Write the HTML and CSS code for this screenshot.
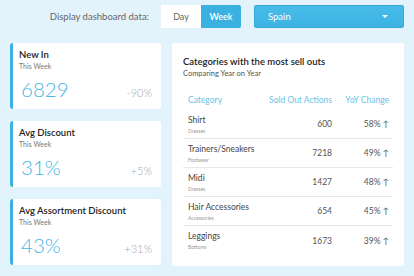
FILE: index.html
```html
<!doctype html>
<html>
<head>
<meta charset="UTF-8">
<title>Dashboard</title>
<link rel="stylesheet" href="styles.css">
</head>
<body>
	<div class="topbar">
		<span class="label">Display dashboard data:</span>
		<div class="toggle">
			<a class="day" href="javascript:void(0);">Day</a>
			<a class="week on" href="javascript:void(0);">Week</a>
		</div>
		<div class="select">
			<span>Spain</span>
			<i class="caret"></i>
		</div>
	</div>
	<div class="main">
		<!--left cards-->
		<div class="stats">
			<div class="card stat">
				<h3>New In</h3>
				<p class="sub">This Week</p>
				<div class="nums"><strong>6829</strong><em>-90%</em></div>
			</div>
			<div class="card stat">
				<h3>Avg Discount</h3>
				<p class="sub">This Week</p>
				<div class="nums"><strong>31%</strong><em>+5%</em></div>
			</div>
			<div class="card stat">
				<h3>Avg Assortment Discount</h3>
				<p class="sub">This Week</p>
				<div class="nums"><strong>43%</strong><em>+31%</em></div>
			</div>
		</div>
		<!--right table-->
		<div class="card sellouts">
			<h2>Categories with the most sell outs</h2>
			<p class="sub">Comparing Year on Year</p>
			<div class="table">
				<div class="row head">
					<span>Category</span><span class="r">Sold Out Actions</span><span class="r">YoY Change</span>
				</div>
				<div class="row">
					<div class="cat">Shirt<small>Dresses</small></div><span class="r">600</span><span class="r">58% &#8593;</span>
				</div>
				<div class="row">
					<div class="cat">Trainers/Sneakers<small>Footwear</small></div><span class="r">7218</span><span class="r">49% &#8593;</span>
				</div>
				<div class="row">
					<div class="cat">Midi<small>Dresses</small></div><span class="r">1427</span><span class="r">48% &#8593;</span>
				</div>
				<div class="row">
					<div class="cat">Hair Accessories<small>Accessories</small></div><span class="r">654</span><span class="r">45% &#8593;</span>
				</div>
				<div class="row">
					<div class="cat">Leggings<small>Bottoms</small></div><span class="r">1673</span><span class="r">39% &#8593;</span>
				</div>
			</div>
		</div>
	</div>
</body>
</html>
```

FILE: styles.css
```css
*{margin:0;padding:0;box-sizing:border-box;}
body{font-family:Lato,"Open Sans",sans-serif;background:#e3f3fb;color:#222;width:414px;height:276px;overflow:hidden;}
a{text-decoration:none;}
/*topbar start*/
.topbar{display:flex;justify-content:flex-end;align-items:center;padding:5px 10px 0 0;height:28px;}
.topbar .label{font-size:9.5px;color:#666;margin-right:12px;}
.toggle{display:flex;height:23px;}
.toggle a{width:40px;display:flex;align-items:center;justify-content:center;font-size:9px;color:#666;background:#fff;}
.toggle a.on{background:#3bb1e1;color:#fff;font-weight:600;border-radius:0 2px 2px 0;}
.select{width:150px;height:23px;margin-left:13px;background:linear-gradient(#47bce9,#3db3e2);border:1px solid #39a9d8;border-radius:2px;display:flex;align-items:center;justify-content:space-between;padding:0 15px 0 13px;color:#fff;font-size:9.5px;}
.caret{width:0;height:0;border-left:3px solid transparent;border-right:3px solid transparent;border-top:3px solid #fff;}
/*topbar end*/
.main{display:flex;gap:11px;padding:15px 10px 0 10px;}
.card{background:#fff;border-radius:3px;}
.sub{font-size:7px;color:#777;margin-top:2px;}
/*stats start*/
.stats{width:151px;display:flex;flex-direction:column;gap:12px;}
.stat{height:66px;border-left:3px solid #3bb1e1;padding:6px 9px 0 6px;}
.stat h3{font-size:9.5px;font-weight:600;color:#222;}
.stat .nums{display:flex;justify-content:space-between;align-items:baseline;margin-top:7px;}
.stat strong{font-size:20.5px;font-weight:300;color:#45b6e4;padding-left:2px;}
.stat em{font-style:normal;font-size:11px;font-weight:300;color:#aaa;}
/*stats end*/
/*sellouts start*/
.sellouts{width:232px;height:223px;padding:13px 11px 0 11px;}
.sellouts h2{font-size:9.5px;font-weight:600;color:#222;}
.sellouts .sub{font-size:7.5px;color:#555;}
.table{margin-top:11px;}
.row{display:grid;grid-template-columns:1fr 64px 57px;align-items:center;padding:0 4px 0 5px;height:29px;border-bottom:1px solid #e8e8e8;font-size:8.5px;color:#555;}
.row:last-child{border-bottom:none;}
.row.head{height:21px;border-bottom:none;color:#6ac3ea;font-size:8.5px;}
.row .r{text-align:right;}
.cat{display:flex;flex-direction:column;font-size:8.5px;color:#444;}
.cat small{font-size:5px;color:#999;margin-top:3px;}
/*sellouts end*/
```
